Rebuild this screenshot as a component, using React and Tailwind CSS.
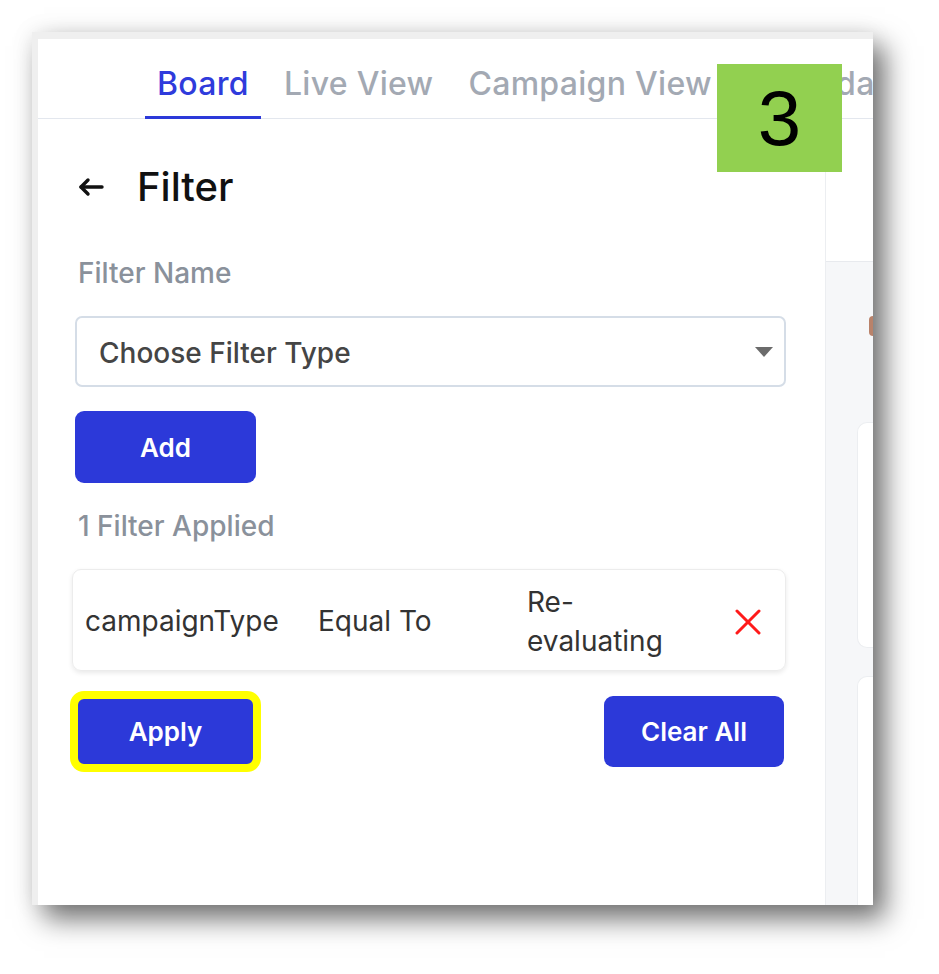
import { useState } from "react";

const tabs = ["Board", "Live View", "Campaign View", "Calendar View"];

function BackArrow() {
  return (
    <svg width="26" height="20" viewBox="0 0 26 20" fill="none" stroke="#111" strokeWidth="3.4" strokeLinecap="round" strokeLinejoin="round">
      <path d="M24 10H3" />
      <path d="M10 3l-7 7 7 7" />
    </svg>
  );
}

function RedCross() {
  return (
    <svg width="26" height="26" viewBox="0 0 26 26" fill="none" stroke="#ff1a1a" strokeWidth="3" strokeLinecap="round">
      <path d="M2 2l22 22" />
      <path d="M24 2L2 24" />
    </svg>
  );
}

export default function App() {
  const [active] = useState("Board");

  return (
    <div className="min-h-screen bg-white pt-[32px] pl-[32px] font-['Inter',sans-serif]">
      <div className="relative w-[841px] h-[873px] overflow-hidden bg-white border-l-[6px] border-t-[7px] border-[#efefef] shadow-[12px_14px_26px_rgba(0,0,0,0.55),0_0_22px_rgba(0,0,0,0.08)] flex flex-col">
        {/* tabs */}
        <div className="h-[80px] shrink-0 border-b border-[#e3e7ee] flex items-end pl-[107px] gap-[11px]">
          {tabs.map((t) => (
            <div
              key={t}
              className={
                t === active
                  ? "px-3 pb-[12px] border-b-[3px] border-[#2c39d9] text-[32px] leading-[40px] font-medium tracking-[0.3px] text-[#2f3bdc] whitespace-nowrap -mb-px"
                  : "px-3 pb-[12px] border-b-[3px] border-transparent text-[32px] leading-[40px] font-medium tracking-[0.3px] text-[#a3a9b3] whitespace-nowrap -mb-px"
              }
            >
              {t}
            </div>
          ))}
        </div>

        <div className="flex flex-1">
          {/* filter panel */}
          <div className="w-[788px] shrink-0 border-r border-[#eceef1] pl-[37px]">
            <div className="w-[711px]">
              <div className="mt-[44px] h-[48px] flex items-center pl-[3px]">
                <BackArrow />
                <span className="ml-[33px] text-[40px] leading-[48px] font-medium text-[#111]">Filter</span>
              </div>

              <div className="mt-[44px] pl-[3px] text-[28px] leading-[36px] font-medium text-[#8a919b]">Filter Name</div>

              <div className="mt-[25px] h-[71px] rounded-[7px] border-2 border-[#d5dde7] flex items-center justify-between pl-[22px] pr-[11px]">
                <span className="text-[28px] font-medium text-[#454545] pt-[2px]">Choose Filter Type</span>
                <svg width="18" height="10" viewBox="0 0 18 10">
                  <path d="M0 0h18L9 10z" fill="#6b6b6b" />
                </svg>
              </div>

              <button className="mt-[24px] w-[181px] h-[72px] rounded-[9px] bg-[#2c39d9] text-white text-[26px] font-semibold">
                Add
              </button>

              <div className="mt-[25px] pl-[3px] text-[28px] leading-[36px] font-medium text-[#8a919b]">1 Filter Applied</div>

              <div className="mt-[25px] -ml-[3px] w-[714px] h-[102px] rounded-[9px] border border-[#ececec] shadow-[0_2px_5px_rgba(0,0,0,0.09)] flex items-center pl-[12px] pt-[3px] text-[28px] leading-[39px] text-[#333]">
                <span className="w-[233px] shrink-0">campaignType</span>
                <span className="w-[209px] shrink-0">Equal To</span>
                <span className="w-[170px] shrink-0">Re-evaluating</span>
                <span className="ml-[38px] flex items-center">
                  <RedCross />
                </span>
              </div>

              <div className="mt-[25px] flex justify-between pr-[2px]">
                <button className="w-[181px] h-[71px] rounded-[9px] bg-[#2c39d9] text-white text-[26px] font-semibold outline-8 outline-solid outline-[#ffff00] outline-offset-[-3px]">
                  Apply
                </button>
                <button className="w-[180px] h-[71px] rounded-[9px] bg-[#2c39d9] text-white text-[26px] font-semibold">
                  Clear All
                </button>
              </div>
            </div>
          </div>

          {/* right board preview (cut off) */}
          <div className="flex-1 flex flex-col">
            <div className="h-[143px] shrink-0 bg-white border-b border-[#e8eaee]" />
            <div className="flex-1 bg-[#f6f7f9] pl-[31px] pt-[54px]">
              <div className="ml-[12px] w-[6px] h-[20px] rounded-l-sm bg-[#b9826a]" />
              <div className="mt-[86px] h-[226px] rounded-l-[10px] bg-white border border-r-0 border-[#eceef1]" />
              <div className="mt-[28px] h-[240px] rounded-l-[10px] bg-white border border-r-0 border-[#eceef1]" />
            </div>
          </div>
        </div>

        {/* step badge */}
        <div className="absolute left-[679px] top-[25px] w-[125px] h-[108px] bg-[#92d050] flex items-center justify-center font-['Liberation_Sans',sans-serif] text-[78px] leading-none text-black">
          3
        </div>
      </div>
    </div>
  );
}
